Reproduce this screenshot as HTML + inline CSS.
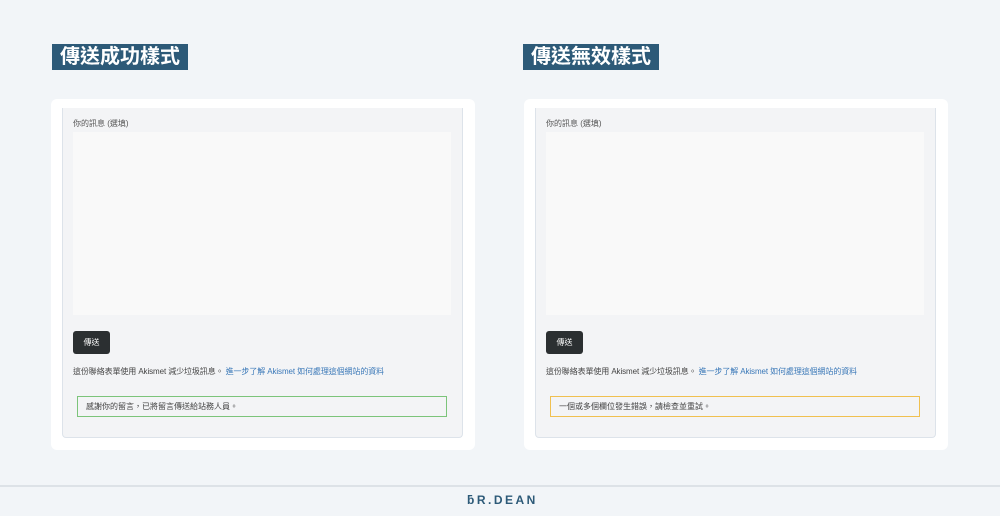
<!DOCTYPE html><html><head><meta charset="utf-8"><style>
body{margin:0;width:1000px;height:516px;background:#f2f5f8;position:relative;overflow:hidden;font-family:"Liberation Sans","Noto Sans CJK TC",sans-serif}
.t{position:absolute;top:44px;height:26px;background:#2d5a78;color:#fff;font-size:20px;font-weight:bold;line-height:26px;padding:0 8px;letter-spacing:0}
.card{position:absolute;top:99px;width:424px;height:351px;background:#fff;border-radius:6px}
.p{position:absolute;left:11px;top:9px;width:399px;height:329px;background:#f3f4f6;border:1px solid #dde3ea;border-top:none;border-radius:0 0 4px 4px}
.lb{position:absolute;left:10px;top:10px;font-size:8px;color:#555}
.ta{position:absolute;left:10px;top:24px;width:378px;height:183px;background:#f9f9f9}
.bt{position:absolute;left:10px;top:223px;width:37px;height:23px;background:#2b2f31;border-radius:3px;color:#fff;font-size:8px;line-height:23px;text-align:center}
.tx{position:absolute;left:10px;top:258px;font-size:8px;color:#444;white-space:nowrap;letter-spacing:-0.1px}
.tx span{color:#3a78b8}
.m{position:absolute;left:14px;top:288px;width:360px;height:19px;border:1px solid;font-size:8px;color:#444;line-height:19px;padding-left:8px}
</style></head><body>
<div class="t" style="left:52px">傳送成功樣式</div>
<div class="t" style="left:523px">傳送無效樣式</div>
<div class="card" style="left:51px"><div class="p"><div class="lb">你的訊息 (選填)</div><div class="ta"></div><div class="bt">傳送</div><div class="tx">這份聯絡表單使用 Akismet 減少垃圾訊息。 <span>進一步了解 Akismet 如何處理這個網站的資料</span></div><div class="m" style="border-color:#7cc47a">感謝你的留言，已將留言傳送給站務人員。</div></div></div>
<div class="card" style="left:524px"><div class="p"><div class="lb">你的訊息 (選填)</div><div class="ta"></div><div class="bt">傳送</div><div class="tx">這份聯絡表單使用 Akismet 減少垃圾訊息。 <span>進一步了解 Akismet 如何處理這個網站的資料</span></div><div class="m" style="border-color:#f0c050">一個或多個欄位發生錯誤，請檢查並重試。</div></div></div>
<div style="position:absolute;left:0;top:485px;width:1000px;height:2px;background:#dde2e7"></div>
<div style="position:absolute;left:467px;top:493px;font-size:12px;font-weight:bold;color:#2d5a78;letter-spacing:2.5px">ƃR.DEAN</div>
</body></html>
